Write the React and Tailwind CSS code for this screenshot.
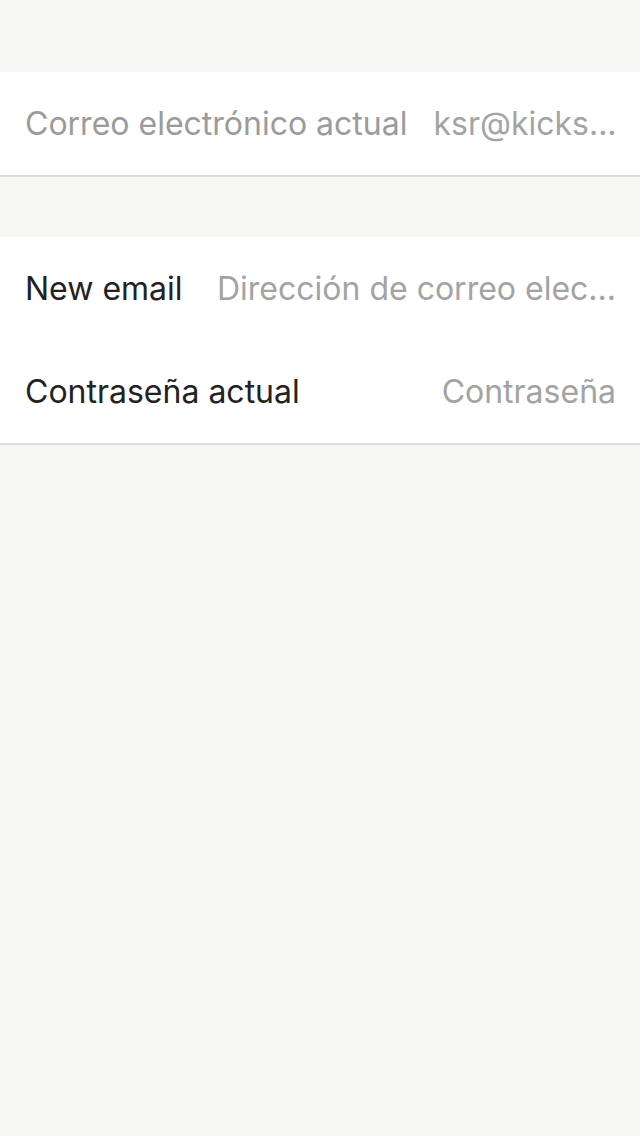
const font = { fontFamily: 'Inter, "Liberation Sans", sans-serif' }

function Row({ label, value, labelMuted }) {
  return (
    <div className="flex items-center justify-between h-[103px] pl-[25px] pr-[24px] text-[32px]">
      <span className={`shrink-0 ${labelMuted ? 'text-[#9b9b9b]' : 'text-[#222222]'}`}>{label}</span>
      <span className="ml-[26px] whitespace-nowrap text-right text-[#a3a3a3]">{value}</span>
    </div>
  )
}

export default function App() {
  return (
    <div className="min-h-[1136px] bg-[#f6f6f4]" style={font}>
      <div className="h-[72px]" />
      <div className="bg-white border-b-2 border-[#dcdcdc]">
        <Row label="Correo electrónico actual" value="ksr@kicks..." labelMuted />
      </div>
      <div className="h-[60px]" />
      <div className="bg-white border-b-2 border-[#dcdcdc]">
        <Row label="New email" value="Dirección de correo elec..." />
        <Row label="Contraseña actual" value="Contraseña" />
      </div>
    </div>
  )
}
